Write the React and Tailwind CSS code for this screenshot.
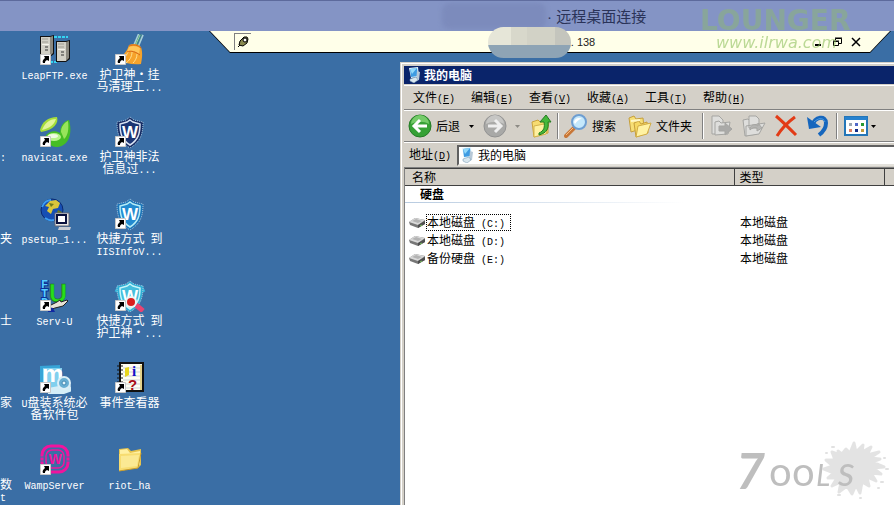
import React from "react";

const desktopIcons = [
  { id: "leap", lines: ["LeapFTP.exe"], shortcut: true },
  { id: "broom", lines: ["护卫神·挂", "马清理工..."], shortcut: true },
  { id: "navicat", lines: ["navicat.exe"], shortcut: true },
  { id: "shieldDark", lines: ["护卫神非法", "信息过..."], shortcut: true },
  { id: "globe", lines: ["psetup_1..."] },
  { id: "shieldBlue", lines: ["快捷方式 到", "IISInfoV..."], shortcut: true },
  { id: "servu", lines: ["Serv-U"], shortcut: true },
  { id: "shieldScan", lines: ["快捷方式 到", "护卫神·..."], shortcut: true },
  { id: "udisk", lines: ["U盘装系统必", "备软件包"], shortcut: true },
  { id: "events", lines: ["事件查看器"], shortcut: true },
  { id: "wamp", lines: ["WampServer"], shortcut: true },
  { id: "folder", lines: ["riot_ha"] },
];

const clippedLabels = [[""], [":"], ["夹"], ["士"], ["家"], ["数", "t"]];

const menus = [
  ["文件", "F"],
  ["编辑", "E"],
  ["查看", "V"],
  ["收藏", "A"],
  ["工具", "T"],
  ["帮助", "H"],
];

const disks = [
  { name: "本地磁盘 (C:)", type: "本地磁盘", focused: true },
  { name: "本地磁盘 (D:)", type: "本地磁盘" },
  { name: "备份硬盘 (E:)", type: "本地磁盘" },
];

// latin runs are half the width of a chinese character
const Mixed = ({ text }) =>
  text.split(/([\x20-\x7e]+)/).map((part, i) =>
    /^[\x20-\x7e]+$/.test(part) ? (
      <span
        key={i}
        className="whitespace-pre font-['Liberation_Mono',monospace] text-[10px]"
      >
        {part}
      </span>
    ) : (
      <span key={i}>{part}</span>
    )
  );

const Shield = ({ outer, inner, ring }) => (
  <>
    <path
      d="M16 1l4 3 9 2c0 13-3 20-13 26C6 26 3 19 3 6l9-2z"
      fill={outer}
      stroke="#a9c8e0"
      strokeWidth="1"
      strokeDasharray="1 1"
    />
    <path
      d="M16 4l3 2 7 2c0 10-2 16-10 21C8 24 6 18 6 8l7-2z"
      fill={inner}
      stroke={ring}
      strokeWidth="1.5"
    />
    <text
      x="16"
      y="22"
      textAnchor="middle"
      fontSize="17"
      fontWeight="bold"
      fontFamily="Liberation Sans, sans-serif"
      fill="#fff"
    >
      W
    </text>
  </>
);

const Server = ({ x, y }) => (
  <g transform={`translate(${x} ${y})`}>
    <path d="M0 1h10l4-1v19l-4 3H0z" fill="#111" />
    <path d="M1 2h9v19H1z" fill="#d2d0c6" />
    <path d="M10 2l3-1v17l-3 3z" fill="#8b8980" />
    <path d="M2 4h6M2 7h6" stroke="#a09e94" />
    <path d="M5 12h3M5 15h3" stroke="#333" />
    <path d="M2 9h7v1H2z" fill="#f5f4ec" />
  </g>
);

const artwork = {
  leap: (
    <>
      <path d="M15 3h14M3 28h15" stroke="#35d4f2" strokeWidth="2" strokeDasharray="3 1" />
      <Server x={1} y={1} />
      <Server x={17} y={6} />
    </>
  ),
  broom: (
    <>
      <path d="M27 0l-5 12" stroke="#a9d0d8" strokeWidth="6" />
      <path d="M27 0l-5 12" stroke="#3f7f92" strokeWidth="3" />
      <path d="M26 1l-4 9" stroke="#9adf9a" />
      <path d="M15 11c5-2 9-1 12 2 2 6 1 12 0 17-8 1-17-1-25-4 6-3 11-8 13-15z" fill="#f6a32b" />
      <path d="M15 13c4-2 8-1 11 1l-1 6c-4-3-8-4-12-2z" fill="#ffc65a" />
      <path d="M14 18c-2 5-5 7-9 9M18 18c0 5-3 9-6 11M23 20c0 4-2 7-4 9" stroke="#ffdf90" fill="none" />
      <path d="M15 12c4-2 9-1 12 2M13 18c4-2 9 0 13 3" stroke="#d66618" fill="none" />
    </>
  ),
  navicat: (
    <>
      <path d="M1 14C3 6 9 1 18 1c2 6-3 13-16 15z" fill="#a6dd3a" />
      <path d="M3 14C6 7 10 3 17 3c-2 6-6 9-14 11z" fill="#e2f59a" />
      <path d="M7 19c4-4 9-5 14-2 0-7 4-12 9-13 3 10 2 25-11 27C12 32 8 26 7 19z" fill="#46bd24" />
      <path d="M22 16c0-5 3-9 7-11 1 8 0 15-4 18-1-3-2-5-3-7z" fill="#98e45b" />
      <ellipse cx="15" cy="21" rx="7" ry="4" fill="#b8f38b" />
      <ellipse cx="14" cy="20" rx="5" ry="2" fill="#effbe3" />
    </>
  ),
  shieldDark: <Shield outer="#152b63" inner="#1b3573" ring="#d9e3f2" />,
  shieldBlue: <Shield outer="#1b74b8" inner="#238bd0" ring="#b6edf7" />,
  shieldScan: (
    <>
      <path d="M5 6l-3 6M27 6l3 6" stroke="#36b6da" strokeWidth="3" />
      <Shield outer="#2daed5" inner="#45bedc" ring="#c8f6fa" />
      <path d="M22 25l7 6" stroke="#e94372" strokeWidth="5" />
      <circle cx="17" cy="22" r="6" fill="#ecf5f4" />
      <circle cx="17" cy="22" r="4" fill="#d91e1e" />
    </>
  ),
  globe: (
    <>
      <circle cx="13" cy="12" r="11" fill="#164fb4" stroke="#0b2a70" />
      <path d="M3 9c2-5 5-7 9-7M6 20c3 2 6 3 9 2" stroke="#3c9df0" strokeWidth="2" fill="none" />
      <path d="M6 8l5-5 6-1 4 3-2 5-5 1-2 5-4-3 2-4z" fill="#d8c53b" />
      <path d="M10 5l5 1-3 3zM19 12l4 2-2 5-4-2z" fill="#6d7a1e" />
      <path d="M16 15h14v13H16z" fill="#e8e8e4" stroke="#667" />
      <path d="M18 17h9v8h-9z" fill="#fff" stroke="#08103c" strokeWidth="2" />
      <path d="M20 29h12l-1 3H19z" fill="#c8ccd2" />
    </>
  ),
  servu: (
    <>
      <g
        fontFamily="Liberation Mono, monospace"
        fontWeight="bold"
        fontSize="12"
        fill="#55ccff"
        stroke="#0a2e96"
        strokeWidth="2"
        paintOrder="stroke"
      >
        <text x="2" y="9">F</text>
        <text x="2" y="18">T</text>
        <text x="2" y="27">P</text>
      </g>
      <text
        x="10"
        y="22"
        fontFamily="Liberation Sans, sans-serif"
        fontWeight="bold"
        fontSize="25"
        fill="#27df18"
        stroke="#15750d"
        strokeWidth="0.5"
      >
        U
      </text>
      <path d="M10 26l8-4 3-2 1 2 6-2 1 1-5 5-8 2-6 2z" fill="#e8e3d7" stroke="#222" />
      <path d="M9 27l5 1 2 4H9z" fill="#1028a0" />
    </>
  ),
  udisk: (
    <>
      <path d="M1 4l20-1v28H1z" fill="#37a4d7" />
      <path d="M4 6h19v21H4z" fill="#81d0ee" />
      <text
        x="3"
        y="20"
        fontFamily="Liberation Sans, sans-serif"
        fontWeight="bold"
        fontSize="24"
        fill="#fff"
      >
        m
      </text>
      <path d="M9 26l22-4 2 7-8 3H9z" fill="#d5eef7" />
      <circle cx="25" cy="21" r="6" fill="#69afd3" stroke="#dceff7" strokeWidth="2" />
      <circle cx="25" cy="21" r="2" fill="#e7f6fb" stroke="#4489b3" />
    </>
  ),
  events: (
    <>
      <path d="M6 1h23v28H6z" fill="#fffef2" stroke="#111" strokeWidth="2" />
      <path d="M27 3v25" stroke="#e5d38c" strokeWidth="2" />
      <path d="M9 6h17M9 10h17M9 14h17M9 18h17M9 22h17M9 26h17" stroke="#ccd3d8" />
      <path d="M3 4h6M3 8h6M3 12h6M3 16h6M3 20h6" stroke="#111" />
      <path d="M11 6l4-1v8l-4 2z" fill="#e8d61c" />
      <text x="18" y="14" fontFamily="Liberation Serif, serif" fontWeight="bold" fontSize="15" fill="#1512c7">
        i
      </text>
      <text x="14" y="28" fontFamily="Liberation Sans, sans-serif" fontWeight="bold" fontSize="15" fill="#a90d18">
        ?
      </text>
    </>
  ),
  wamp: (
    <>
      <rect x="3" y="2" width="26" height="26" rx="9" fill="none" stroke="#f0149d" strokeWidth="3" />
      <rect x="7" y="6" width="18" height="18" rx="6" fill="none" stroke="#f0149d" strokeWidth="1.5" />
      <text
        x="16"
        y="20"
        textAnchor="middle"
        fontFamily="Liberation Sans, sans-serif"
        fontWeight="bold"
        fontSize="14"
        fill="#f0149d"
      >
        W
      </text>
      <path d="M1 13h5M26 13h5M1 17h5M26 17h5" stroke="#3a6ea5" />
    </>
  ),
  folder: (
    <>
      <path d="M5 5l9-1 3 3 10-2v16l-3 3-19 3z" fill="#e6c34d" />
      <path d="M6 6l7-1 3 4 10-2v13l-2 3-18 3z" fill="#fff0a2" />
      <path d="M5 10l22-1-3 15-19 3z" fill="#f7dc70" />
      <path d="M7 12l18-1-2 11-16 2z" fill="#fbe993" />
      <path d="M5 27l19-3 3-15" stroke="#c79c2e" fill="none" />
    </>
  ),
};

const DesktopIcon = ({ item }) => (
  <button type="button" className="flex h-[82px] w-[75px] flex-col items-center">
    <svg className="h-8 w-8 shrink-0" viewBox="0 0 32 32" aria-hidden="true">
      {artwork[item.id]}
      {item.shortcut && (
        <>
          <path d="M1.500 20.500h10v10h-10z" fill="#fff" stroke="#c8c8c8" />
          <path d="M5 22h5v5l-2-1c-2 1-2 2-2 3H4c-1-2 0-3 2-5z" fill="#000" />
        </>
      )}
    </svg>
    <span className="mt-[2px] text-center leading-3 whitespace-nowrap text-white">
      {item.lines.map((line) => (
        <span key={line} className="block h-3">
          <Mixed text={line} />
        </span>
      ))}
    </span>
  </button>
);

const Computer = () => (
  <svg className="h-4 w-4 shrink-0" viewBox="0 0 16 16" aria-hidden="true">
    <path d="M3 1l9-1 1 10-8 1z" fill="#e5f5fc" />
    <path d="M4 2l7-1 1 8-7 1z" fill="#3e9be2" />
    <path d="M4 2l7-1-5 6z" fill="#92d9fa" />
    <path d="M11 4l3 1-1 8-3 1z" fill="#b8c9d8" />
    <path d="M4 12l6-2 2 3-4 3-4-2z" fill="#d9e7ef" stroke="#6c91ad" strokeWidth="0.5" />
  </svg>
);

const Disk = () => (
  <svg className="h-4 w-[17px] shrink-0" viewBox="0 0 17 16" aria-hidden="true">
    <path d="M0 8l6-4 10 2v4l-7 4-8-3z" fill="#777" />
    <path d="M0 8l6-4 10 2-7 5z" fill="#d9d9d9" />
    <path d="M3 7l4-2 6 2-4 2z" fill="#b3b3b3" />
    <path d="M9 11l7-4v3l-7 4z" fill="#4f4f4f" />
    <path d="M11 12l2-1" stroke="#76c45b" />
  </svg>
);

const Round = ({ back }) => (
  <svg className="h-6 w-6" viewBox="0 0 24 24" aria-hidden="true">
    <circle cx="12" cy="12" r="11" fill={back ? "#36a135" : "#a9a9a7"} stroke={back ? "#237b25" : "#929292"} />
    <path d="M3 10a9 9 0 0118 0c-5-3-12-3-18 0z" fill={back ? "#75cb69" : "#c6c6c4"} />
    <path
      d={back ? "M12 6l-6 6 6 6M7 12h12" : "M12 6l6 6-6 6M17 12H5"}
      fill="none"
      stroke={back ? "#fff" : "#eee"}
      strokeWidth="3"
    />
  </svg>
);

const Caret = ({ dim }) => (
  <svg className="h-[3px] w-[5px]" viewBox="0 0 5 3" aria-hidden="true">
    <path d="M0 0h5L2.500 3z" fill={dim ? "#8c8a84" : "#000"} />
  </svg>
);

const FolderUp = () => (
  <svg className="h-6 w-[22px]" viewBox="0 0 22 24" aria-hidden="true">
    <path d="M2 8l6-2 2 2 8-2v13L4 23z" fill="#f7dc70" stroke="#c9a33d" />
    <path d="M4 12l15-3-3 11-12 3z" fill="#fff1a0" stroke="#d4b34c" />
    <path d="M9 19c5-2 6-6 5-11h-4l6-7 5 7h-3c1 6-1 11-9 13z" fill="#45b83a" stroke="#237c20" />
  </svg>
);

const Search = () => (
  <svg className="h-6 w-6" viewBox="0 0 24 24" aria-hidden="true">
    <path d="M10 14l-8 8" stroke="#c87738" strokeWidth="4" strokeLinecap="round" />
    <path d="M9 14l-7 7" stroke="#f7bd80" />
    <circle cx="15" cy="8" r="7" fill="#c5e8fb" stroke="#6e9ed1" strokeWidth="2" />
    <path d="M10 8c1-4 5-5 8-3-3 0-5 2-7 5z" fill="#fff" />
  </svg>
);

const Folders = () => (
  <svg className="h-6 w-6" viewBox="0 0 24 24" aria-hidden="true">
    <path d="M1 4l5-2 2 3 7-1 1 10-13 4z" fill="#f7df76" stroke="#c69f3c" />
    <path d="M6 9l5-2 2 3 6-2 1 11-12 4z" fill="#f5d863" stroke="#c69f3c" />
    <path d="M10 12l13-3-4 11-11 3z" fill="#fff2a3" stroke="#d2ac43" />
    <path d="M3 7l9-1" stroke="#fff7c7" strokeWidth="2" />
  </svg>
);

const MoveTo = ({ copy }) => (
  <svg className="h-6 w-6" viewBox="0 0 24 24" fill="#dededc" stroke="#a5a5a2" aria-hidden="true">
    {copy ? (
      <>
        <path d="M1 6l5-1 2 2 7-1v14L3 22z" />
        <path d="M7 2h7l3 3v9H7zM4 12l19-3-6 11-13 2z" />
        <path d="M8 14c2-4 5-4 8-2v-3l4 5-5 3v-3c-3-1-5 0-7 2z" fill="#b5b5b3" />
      </>
    ) : (
      <>
        <path d="M2 2h7l4 4v14H2z" />
        <path d="M5 8l4-1 2 2 9-1-2 12-13 1z" />
        <path d="M9 12h6V9l7 6-7 6v-4H9z" fill="#aaaaa8" />
      </>
    )}
  </svg>
);

const Delete = () => (
  <svg className="h-6 w-6" viewBox="0 0 24 24" aria-hidden="true">
    <path d="M2 2c7 6 13 12 20 19M21 3C14 8 8 14 3 22" fill="none" stroke="#e23b16" strokeWidth="3" />
  </svg>
);

const Undo = () => (
  <svg className="h-6 w-6" viewBox="0 0 24 24" aria-hidden="true">
    <path d="M6 12C9 2 20 1 20 9c0 5-3 9-7 12" fill="none" stroke="#1666bd" strokeWidth="4" />
    <path d="M1 3l2 12 12-2z" fill="#1666bd" />
    <path d="M8 8c4-4 9-5 11 0" fill="none" stroke="#4d9ee5" />
  </svg>
);

const Views = () => (
  <svg className="h-5 w-6" viewBox="0 0 24 20" aria-hidden="true">
    <path d="M1 1h22v18H1z" fill="#fff" stroke="#2476b8" strokeWidth="2" />
    <path d="M1 1h22v3H1z" fill="#2782cf" />
    <path d="M5 7h3v3H5z" fill="#9aa5b0" />
    <path d="M11 7h3v3h-3z" fill="#5068c8" />
    <path d="M17 7h3v3h-3z" fill="#279a32" />
    <path d="M5 13h3v3H5z" fill="#e08065" />
    <path d="M11 13h3v3h-3z" fill="#162e87" />
    <path d="M17 13h3v3h-3z" fill="#c29c3c" />
  </svg>
);

const Separator = () => (
  <span className="h-[26px] w-[2px] shrink-0 border-r border-l border-r-white border-l-[#808080]" />
);

const ConnectionBar = () => (
  <div className="absolute top-[31px] right-[3px] left-[209px] h-[22px] bg-black [clip-path:polygon(0_0,100%_0,calc(100%-21px)_100%,21px_100%)]">
    <div className="flex h-[21px] items-center bg-[#ffffe9] pr-[30px] pl-[25px] [clip-path:polygon(1px_0,calc(100%-1px)_0,calc(100%-21px)_100%,21px_100%)]">
      <button
        type="button"
        aria-label="固定"
        className="flex h-[17px] w-[17px] items-center justify-center border-t border-l border-[#808080]"
      >
        <svg className="h-3 w-3" viewBox="0 0 12 12" aria-hidden="true">
          <path d="M1 11l3-3" stroke="#000" />
          <path d="M3 5l4-4h3l1 2-1 4-4 3-4-1z" fill="#8a8a50" stroke="#000" />
          <circle cx="8" cy="4" r="2" fill="#fff" stroke="#000" />
        </svg>
      </button>
      <span className="flex-1 pl-[102px] text-center font-['Liberation_Sans',sans-serif] text-[11px] text-[#222]">
        . 138
      </span>
      <div className="flex items-center gap-[9px]">
        <button type="button" aria-label="最小化">
          <svg className="h-[10px] w-[10px]" viewBox="0 0 10 10" aria-hidden="true">
            <path d="M2 7h6v2H2z" />
          </svg>
        </button>
        <button type="button" aria-label="还原">
          <svg className="h-[10px] w-[10px]" viewBox="0 0 10 10" fill="none" stroke="#000" aria-hidden="true">
            <path d="M3.500 3V1.500h6v5H7M3 1h7M1.500 4.500h5v4h-5zM1 4h6" />
          </svg>
        </button>
        <button type="button" aria-label="关闭">
          <svg className="h-[10px] w-[10px]" viewBox="0 0 10 10" stroke="#000" strokeWidth="1.5" aria-hidden="true">
            <path d="M1 1l8 8M9 1L1 9" />
          </svg>
        </button>
      </div>
    </div>
  </div>
);

const ToolsLogo = () => (
  <div className="absolute right-1 bottom-[4px] h-[60px] w-[156px] opacity-90">
    <svg className="h-full w-full overflow-visible" viewBox="0 0 156 60" aria-hidden="true">
      <path
        d="M104 10l4 3 4-5 4 4 4-10 2 9 7-7-1 7 9-5-4 8 12-3-9 6 10 1-8 3 12 5-11 1 8 6-10-1 5 8-9-4 2 9-7-4-2 11-4-8-4 9-5-8-8 6 2-10-9 4 5-8-9 0 6-5-10-4 9-3-7-6 9 0-3-8 8 3z"
        fill="#e1e1e1"
        stroke="#e1e1e1"
        strokeWidth="3"
        strokeLinejoin="round"
      />
      <path d="M92 12h1M98 6h2M150 17h1M147 41h2M144 47h1M104 54h2M126 57h1M152 28h2" stroke="#dedede" strokeWidth="2" strokeLinecap="round" />
      <g fontFamily="Lato, sans-serif" fill="#b8b8b8">
        <text x="2" y="48" fontSize="50" fontStyle="italic" fontWeight="bold">7</text>
        <text x="35" y="45" fontSize="40">o</text>
        <text x="58" y="45" fontSize="40">o</text>
        <text x="82" y="45" fontSize="30" fontStyle="italic">L</text>
        <text x="104" y="45" fontSize="42" fontStyle="italic">s</text>
      </g>
    </svg>
  </div>
);

const Toolbar = () => (
  <div className="flex h-8 items-center border-t border-b border-t-white border-b-[#808080] pl-1">
    <button type="button" className="flex items-center gap-1">
      <Round back />
      后退
    </button>
    <button type="button" aria-label="后退列表" className="ml-[9px]">
      <Caret />
    </button>
    <button type="button" aria-label="前进" className="ml-[9px]">
      <Round />
    </button>
    <button type="button" aria-label="前进列表" className="mr-[10px] ml-[8px]">
      <Caret dim />
    </button>
    <button type="button" aria-label="向上" className="mr-[5px]">
      <FolderUp />
    </button>
    <Separator />
    <button type="button" className="ml-[5px] flex items-center gap-1">
      <Search />
      搜索
    </button>
    <button type="button" className="mr-[10px] ml-[12px] flex items-center gap-1">
      <Folders />
      文件夹
    </button>
    <Separator />
    <div className="mr-[6px] ml-[6px] flex gap-2">
      <button type="button" aria-label="移到">
        <MoveTo />
      </button>
      <button type="button" aria-label="复制到">
        <MoveTo copy />
      </button>
      <button type="button" aria-label="删除">
        <Delete />
      </button>
      <button type="button" aria-label="撤消">
        <Undo />
      </button>
    </div>
    <Separator />
    <button type="button" aria-label="查看" className="ml-[6px] flex items-center gap-[3px]">
      <Views />
      <Caret />
    </button>
  </div>
);

const FileList = () => (
  <table className="w-full table-fixed border-collapse text-left">
    <thead>
      <tr className="h-[17px] border-t border-b border-[#404040] bg-[#d4d0c8] leading-[14px]">
        <th className="w-[329px] border-r border-[#404040] pl-[7px] font-normal">名称</th>
        <th className="w-[150px] border-r border-[#404040] pl-[5px] font-normal">类型</th>
        <th />
      </tr>
    </thead>
    <tbody>
      <tr>
        <th colSpan={3} className="pb-[10px] font-bold">
          <span className="block h-[16px] pl-[15px] leading-[16px]">硬盘</span>
          <span className="block h-px w-[280px] bg-linear-to-r from-[#b8cbe0] to-white" />
        </th>
      </tr>
      {disks.map((disk) => (
        <tr key={disk.name} className="h-[18px]">
          <td className="p-0 pl-1">
            <span className="flex items-center">
              <Disk />
              <span
                className={
                  disk.focused
                    ? "h-[17px] w-[85px] border border-dotted border-black leading-[14px]"
                    : "h-[17px] w-[85px] border border-transparent leading-[14px]"
                }
              >
                <Mixed text={disk.name} />
              </span>
            </span>
          </td>
          <td className="p-0 pl-[6px]">{disk.type}</td>
          <td />
        </tr>
      ))}
    </tbody>
  </table>
);

const ExplorerWindow = () => (
  <section className="mt-[31px] flex min-w-0 flex-1 flex-col border-t border-l border-[#d4d0c8] bg-[#d4d0c8] text-black">
    <div className="flex flex-1 flex-col border-t border-l border-white pt-[2px] pl-[2px]">
      <header className="flex h-[18px] shrink-0 items-center gap-[2px] bg-[#0a246a] pl-[2px] font-bold text-white">
        <Computer />
        <h1>我的电脑</h1>
      </header>

      <nav className="mt-px flex h-[25px] shrink-0 items-center gap-4 border-t border-b border-t-white border-b-[#808080] pt-px pl-[9px]">
        {menus.map(([label, key]) => (
          <button key={key} type="button" className="w-[42px] text-left whitespace-nowrap">
            {label}
            <span className="font-['Liberation_Mono',monospace] text-[10px]">
              (<u>{key}</u>)
            </span>
          </button>
        ))}
      </nav>

      <Toolbar />

      {/* address */}
      <div className="flex h-[25px] shrink-0 items-center border-t border-white pl-[5px]">
        <label htmlFor="address" className="w-[48px] whitespace-nowrap">
          地址
          <span className="font-['Liberation_Mono',monospace] text-[10px]">
            (<u>D</u>)
          </span>
        </label>
        <div className="flex h-[21px] flex-1 items-center gap-[3px] border-2 border-r-0 border-t-[#606060] border-b-[#e4e2dc] border-l-[#606060] bg-white">
          <Computer />
          <input
            id="address"
            defaultValue="我的电脑"
            className="min-w-0 flex-1 bg-transparent outline-none"
          />
        </div>
      </div>

      <main className="flex-1 border-t border-l border-[#808080] bg-white">
        <FileList />
      </main>
    </div>
  </section>
);

const App = () => (
  <div className="relative flex h-screen flex-col overflow-hidden bg-[#3a6ea5] font-['Noto_Sans_CJK_SC',sans-serif] text-[12px] leading-4">
    <header className="flex h-[31px] shrink-0 items-center border-t border-[#5d6a9c] bg-[#8494c5]">
      <span className="ml-[442px] h-[26px] w-[104px] rounded-lg bg-[#7c8bbc] blur-[2px]" />
      <span className="ml-px text-[15px] whitespace-pre text-[#2a3358]">
        <span className="font-['Liberation_Sans',sans-serif]">· </span>远程桌面连接
      </span>
    </header>

    <div className="flex min-h-0 flex-1">
      <div className="flex w-[400px] shrink-0 pt-[3px]">
        <div className="w-[17px] shrink-0 overflow-hidden text-white">
          {clippedLabels.map((lines, i) => (
            <div key={i} className="h-[82px] pt-[34px] leading-3">
              {lines.map((line) => (
                <div key={line} className="h-3">
                  <Mixed text={line} />
                </div>
              ))}
            </div>
          ))}
        </div>
        <div className="grid auto-rows-[82px] grid-cols-[75px_75px] content-start">
          {desktopIcons.map((item) => (
            <DesktopIcon key={item.id} item={item} />
          ))}
        </div>
      </div>
      <ExplorerWindow />
    </div>

    <ConnectionBar />
    {/* smudge over the address */}
    <div className="absolute top-[27px] left-[488px] h-[31px] w-[83px] overflow-hidden rounded-2xl">
      <div className="flex h-[18px]">
        <span className="flex-1 bg-[#e6e6d8]" />
        <span className="w-[16px] bg-[#d8d8cb]" />
        <span className="w-[28px] bg-[#d2d2c6]" />
        <span className="w-[16px] bg-[#c4c5bd]" />
      </div>
      <div className="h-[13px] bg-[#8ea4b5]" />
    </div>

    <div className="pointer-events-none absolute top-[7px] right-[38px] w-[156px] font-['DejaVu_Sans',sans-serif] text-[#8fc05f]">
      <p className="text-[28px] leading-7 font-bold opacity-40">LOUNGER</p>
      <p className="pl-4 text-[16px] leading-4 italic opacity-60">www.ilrwa.com</p>
    </div>
    <ToolsLogo />
  </div>
);

export default App;
